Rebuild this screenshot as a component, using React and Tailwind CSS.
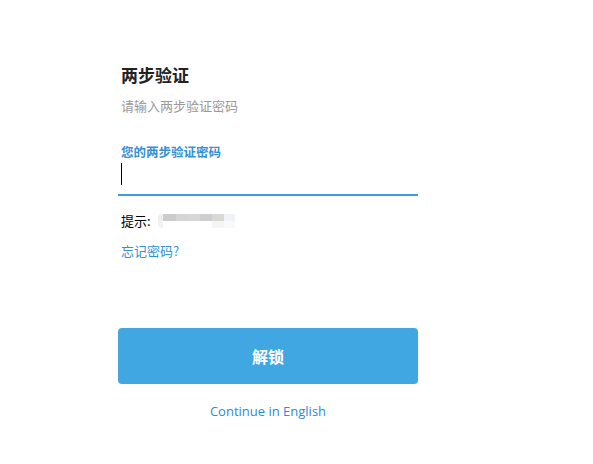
export default function App() {
  const cjk = { fontFamily: '"Noto Sans CJK SC", "Noto Sans", sans-serif' };
  return (
    <div className="w-[593px] h-[464px] bg-white" style={cjk}>
      <div className="pl-[118px] pt-[63px] w-[418px] flex flex-col">
        <div className="pl-[3px] text-[17px] leading-[24px] font-bold text-[#222222]">两步验证</div>
        <div className="pl-[3px] mt-[9px] text-[13px] leading-[20px] text-[#999999]">请输入两步验证密码</div>
        <div className="pl-[3px] mt-[27px] text-[12.5px] leading-[18px] font-bold text-[#3390d6]">您的两步验证密码</div>
        <div className="h-[35px] border-b-2 border-[#3a9ee0] pl-[3px] pt-[2px]">
          <div className="w-[1px] h-[22px] bg-black"></div>
        </div>
        <div className="pl-[3px] mt-[15px] flex items-center h-[20px] text-[13px] leading-[20px] text-black">
          <span>提示:</span>
          <div className="ml-[7px] flex flex-col blur-[0.6px]">
            <div className="flex">
              <div className="w-[5px] h-[7px] bg-[#eeeeee] rounded-tl-[4px]"></div>
              <div className="w-[13px] h-[7px] bg-[#cccccc]"></div>
              <div className="w-[12px] h-[7px] bg-[#d5d5d5]"></div>
              <div className="w-[12px] h-[7px] bg-[#d7d7d7]"></div>
              <div className="w-[12px] h-[7px] bg-[#ccced0]"></div>
              <div className="w-[12px] h-[7px] bg-[#d9d8d5]"></div>
              <div className="w-[11px] h-[7px] bg-[#f0f2f8]"></div>
            </div>
            <div className="flex">
              <div className="w-[5px] h-[7px] bg-[#f2f2f2] rounded-bl-[4px]"></div>
              <div className="w-[49px] h-[7px] bg-white"></div>
              <div className="w-[12px] h-[7px] bg-[#f6f5f3]"></div>
              <div className="w-[11px] h-[7px] bg-[#f9f9fb]"></div>
            </div>
          </div>
        </div>
        <div className="pl-[3px] mt-[10px] text-[13px] leading-[20px] text-[#3390d6]">忘记密码?</div>
        <button className="mt-[67px] w-[300px] h-[56px] rounded-[4px] bg-[#40a7e3] text-white text-[16px] font-bold flex items-center justify-center">
          解锁
        </button>
        <div
          className="mt-[17px] w-[300px] text-center text-[13px] leading-[20px] text-[#2f8ad3]"
          style={{ fontFamily: '"Open Sans", sans-serif' }}
        >
          Continue in English
        </div>
      </div>
    </div>
  );
}
